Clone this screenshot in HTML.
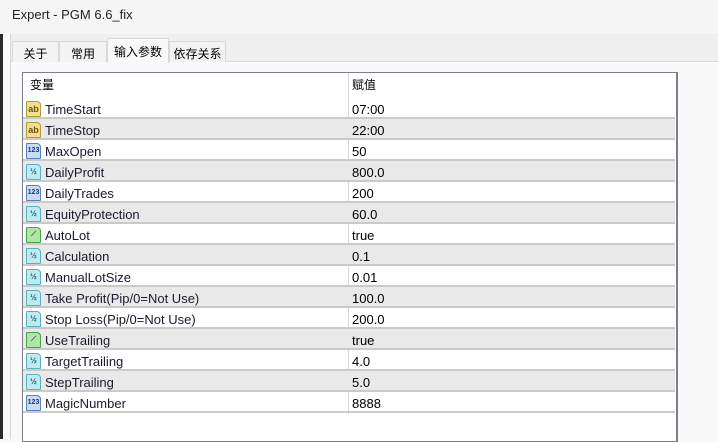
<!DOCTYPE html>
<html><head><meta charset="utf-8"><style>
*{margin:0;padding:0;box-sizing:border-box}
body{width:718px;height:439px;overflow:hidden;background:#f9f9f9;font-family:"Liberation Sans","Noto Sans CJK SC",sans-serif;font-size:13px;color:#000;position:relative}
.title{position:absolute;left:0;top:0;width:718px;height:34px;background:#f5f5f5}
.title span{position:absolute;left:12px;top:7px;font-size:13px;color:#222}
.edge{position:absolute;left:0;top:34px;width:3px;height:405px;background:#2a2a2a}
.edge2{position:absolute;left:3px;top:34px;width:8px;height:405px;background:#fafafa;border-right:1px solid #d8d8d8}
.tabrow{position:absolute;left:11px;top:34px;width:707px;height:28px;background:#efefef;border-bottom:1px solid #dcdcdc}
.tab{position:absolute;top:7px;height:21px;background:#f3f3f3;border:1px solid #d8d8d8;border-bottom:none;font-size:12px;padding:3px 0 0 0;text-align:center}
.tab.sel{top:4px;height:25px;background:#f9f9f9;padding-top:4px}
.box{position:absolute;left:22px;top:72px;width:656px;height:370px;background:#fff;border:1px solid #7a808a;border-right:2px solid #7a808a}
.hdr{position:absolute;left:0;top:0;width:652px;height:25px}
.hdr span{position:absolute;top:3px;font-size:12px}
.vline{position:absolute;left:325px;top:0;width:1px;height:341px;background:#d8d8d8}
.row{position:absolute;left:0;width:652px;height:21px;border-bottom:2px solid #cacaca}
.row.g{background:#e9e9e9}
.row .n{position:absolute;left:22px;top:4px;color:#1a1a2e}
.row .v{position:absolute;left:329px;top:4px}
.ic{position:absolute;left:3px;top:3px;width:15px;height:16px;border:1px solid;border-radius:1px 4px 1px 1px;font-size:7px;line-height:14px;text-align:center;font-weight:bold}
.ab{background:#f4e08c;border-color:#b09a40;color:#6a5010;font-size:9px}
.n1{background:#c8dcf4;border-color:#5a80b8;color:#1a3a80}
.h{background:#bfeaf0;border-color:#5ab0c0;color:#206070;font-size:8px}
.gr{background:#b0e4a8;border-color:#48a048;color:#205020}
</style></head><body>
<div class="title"><span>Expert - PGM 6.6_fix</span></div>
<div class="edge"></div><div class="edge2"></div>
<div class="tabrow">
<div class="tab" style="left:1px;width:47px">关于</div>
<div class="tab" style="left:48px;width:48px">常用</div>
<div class="tab sel" style="left:96px;width:62px">输入参数</div>
<div class="tab" style="left:158px;width:57px">依存关系</div>
</div>
<div class="box">
<div class="hdr"><span style="left:7px">变量</span><span style="left:329px">赋值</span></div>
<div class="vline"></div>
<div class="row" style="top:25px"><div class="ic ab">ab</div><span class="n">TimeStart</span><span class="v">07:00</span></div>
<div class="row g" style="top:46px"><div class="ic ab">ab</div><span class="n">TimeStop</span><span class="v">22:00</span></div>
<div class="row" style="top:67px"><div class="ic n1">123</div><span class="n">MaxOpen</span><span class="v">50</span></div>
<div class="row g" style="top:88px"><div class="ic h">½</div><span class="n">DailyProfit</span><span class="v">800.0</span></div>
<div class="row" style="top:109px"><div class="ic n1">123</div><span class="n">DailyTrades</span><span class="v">200</span></div>
<div class="row g" style="top:130px"><div class="ic h">½</div><span class="n">EquityProtection</span><span class="v">60.0</span></div>
<div class="row" style="top:151px"><div class="ic gr">⟋</div><span class="n">AutoLot</span><span class="v">true</span></div>
<div class="row g" style="top:172px"><div class="ic h">½</div><span class="n">Calculation</span><span class="v">0.1</span></div>
<div class="row" style="top:193px"><div class="ic h">½</div><span class="n">ManualLotSize</span><span class="v">0.01</span></div>
<div class="row g" style="top:214px"><div class="ic h">½</div><span class="n">Take Profit(Pip/0=Not Use)</span><span class="v">100.0</span></div>
<div class="row" style="top:235px"><div class="ic h">½</div><span class="n">Stop Loss(Pip/0=Not Use)</span><span class="v">200.0</span></div>
<div class="row g" style="top:256px"><div class="ic gr">⟋</div><span class="n">UseTrailing</span><span class="v">true</span></div>
<div class="row" style="top:277px"><div class="ic h">½</div><span class="n">TargetTrailing</span><span class="v">4.0</span></div>
<div class="row g" style="top:298px"><div class="ic h">½</div><span class="n">StepTrailing</span><span class="v">5.0</span></div>
<div class="row" style="top:319px"><div class="ic n1">123</div><span class="n">MagicNumber</span><span class="v">8888</span></div>
</div>
</body></html>
